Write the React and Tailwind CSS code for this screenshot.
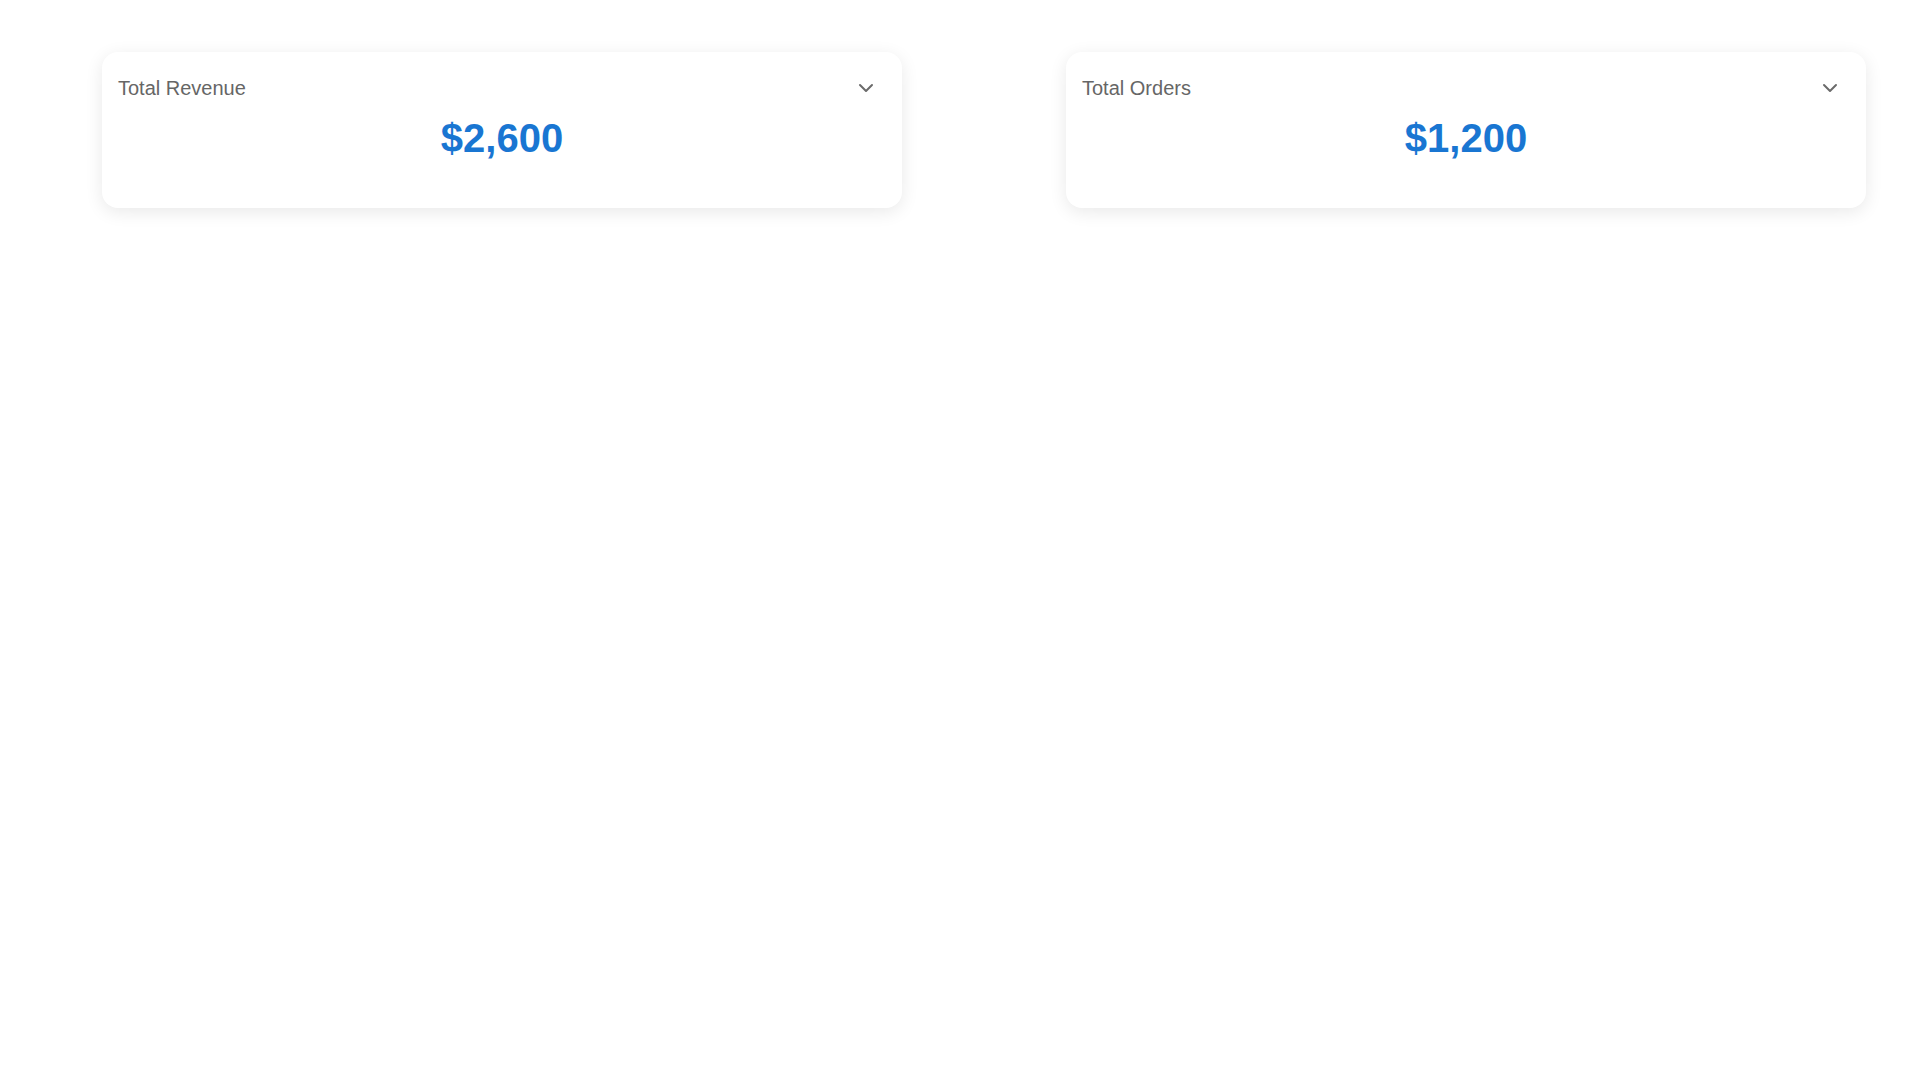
import React from 'react';
import { ChevronDown } from 'lucide-react';

const STATS = [
  { title: 'Total Revenue', value: '$2,600' },
  { title: 'Total Orders', value: '$1,200' },
];

const StatCard = ({ title, value }) => (
  <div className="w-[800px] h-[156px] bg-white rounded-2xl shadow-[0_4px_18px_rgba(0,0,0,0.09)] px-4 pt-4">
    <div className="flex items-center justify-between">
      <span className="text-xl text-[#666666]">{title}</span>
      <button className="p-2 rounded-full text-[#6b6b6b]">
        <ChevronDown className="w-6 h-6" strokeWidth={2} />
      </button>
    </div>
    <div className="mt-[10px] text-center text-[40px] leading-[40px] font-bold text-[#1976d2]">
      {value}
    </div>
  </div>
);

export default function App() {
  return (
    <div
      className="min-h-screen bg-white flex items-start gap-[164px] pl-[102px] pt-[52px]"
      style={{ fontFamily: '"Liberation Sans", Arial, sans-serif' }}
    >
      {STATS.map((s) => (
        <StatCard key={s.title} {...s} />
      ))}
    </div>
  );
}
